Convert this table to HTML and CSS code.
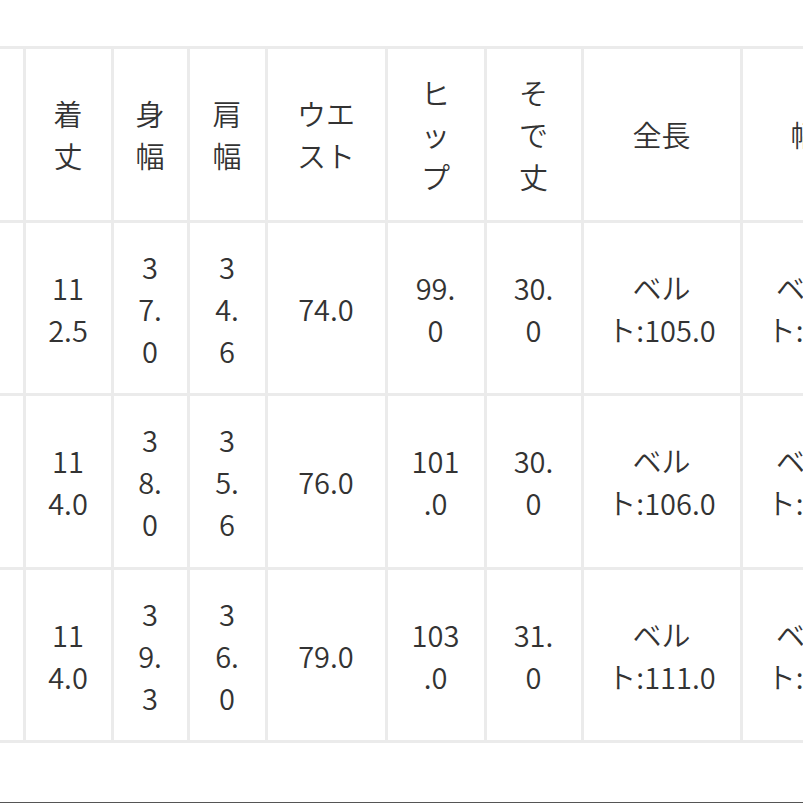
FILE: index.html
```html
<!DOCTYPE html>
<html lang="ja">
<head>
<meta charset="utf-8">
<title>サイズ表</title>
<link rel="stylesheet" href="styles.css">
</head>
<body>
<div class="page">
  <div class="scroller">
    <table class="size-table">
      <colgroup>
        <col class="c0"><col class="c1"><col class="c2"><col class="c3"><col class="c4"><col class="c5"><col class="c6"><col class="c7"><col class="c8">
      </colgroup>
      <thead>
        <tr><th></th><th>着丈</th><th>身幅</th><th>肩幅</th><th>ウエスト</th><th>ヒップ</th><th>そで丈</th><th>全長</th><th>幅</th></tr>
      </thead>
      <tbody>
        <tr><td></td><td>112.5</td><td>37.0</td><td>34.6</td><td>74.0</td><td>99.0</td><td>30.0</td><td>ベルト:105.0</td><td>ベルト:3.5</td></tr>
        <tr><td></td><td>114.0</td><td>38.0</td><td>35.6</td><td>76.0</td><td>101.0</td><td>30.0</td><td>ベルト:106.0</td><td>ベルト:3.5</td></tr>
        <tr><td></td><td>114.0</td><td>39.3</td><td>36.0</td><td>79.0</td><td>103.0</td><td>31.0</td><td>ベルト:111.0</td><td>ベルト:3.5</td></tr>
      </tbody>
    </table>
  </div>
  <div class="rule"></div>
</div>
</body>
</html>
```

FILE: styles.css
```css
html, body {
  margin: 0;
  padding: 0;
  background: #ffffff;
}

.page {
  height: 803px;
  display: flex;
  flex-direction: column;
  overflow: hidden;
}

.scroller {
  width: 803px;
  overflow: hidden;
  padding-top: 46px;
}

.size-table {
  table-layout: fixed;
  border-collapse: collapse;
  width: 869px;
  font-family: "Noto Sans CJK JP", "Noto Sans", sans-serif;
  font-size: 29px;
  line-height: 42px;
  color: #333333;
}

.c0 { width: 24px; }
.c1 { width: 88px; }
.c2 { width: 76px; }
.c3 { width: 78px; }
.c4 { width: 120px; }
.c5 { width: 99px; }
.c6 { width: 97px; }
.c7 { width: 159px; }
.c8 { width: 128px; }

.size-table th,
.size-table td {
  border: 3px solid #ebebeb;
  padding: 22.25px 22px;
  text-align: center;
  vertical-align: middle;
  font-weight: 350;
  overflow-wrap: anywhere;
}

.size-table th:first-child,
.size-table td:first-child {
  border-left: 0;
}

.rule {
  margin-top: auto;
  height: 1px;
  background: #555555;
}
```
